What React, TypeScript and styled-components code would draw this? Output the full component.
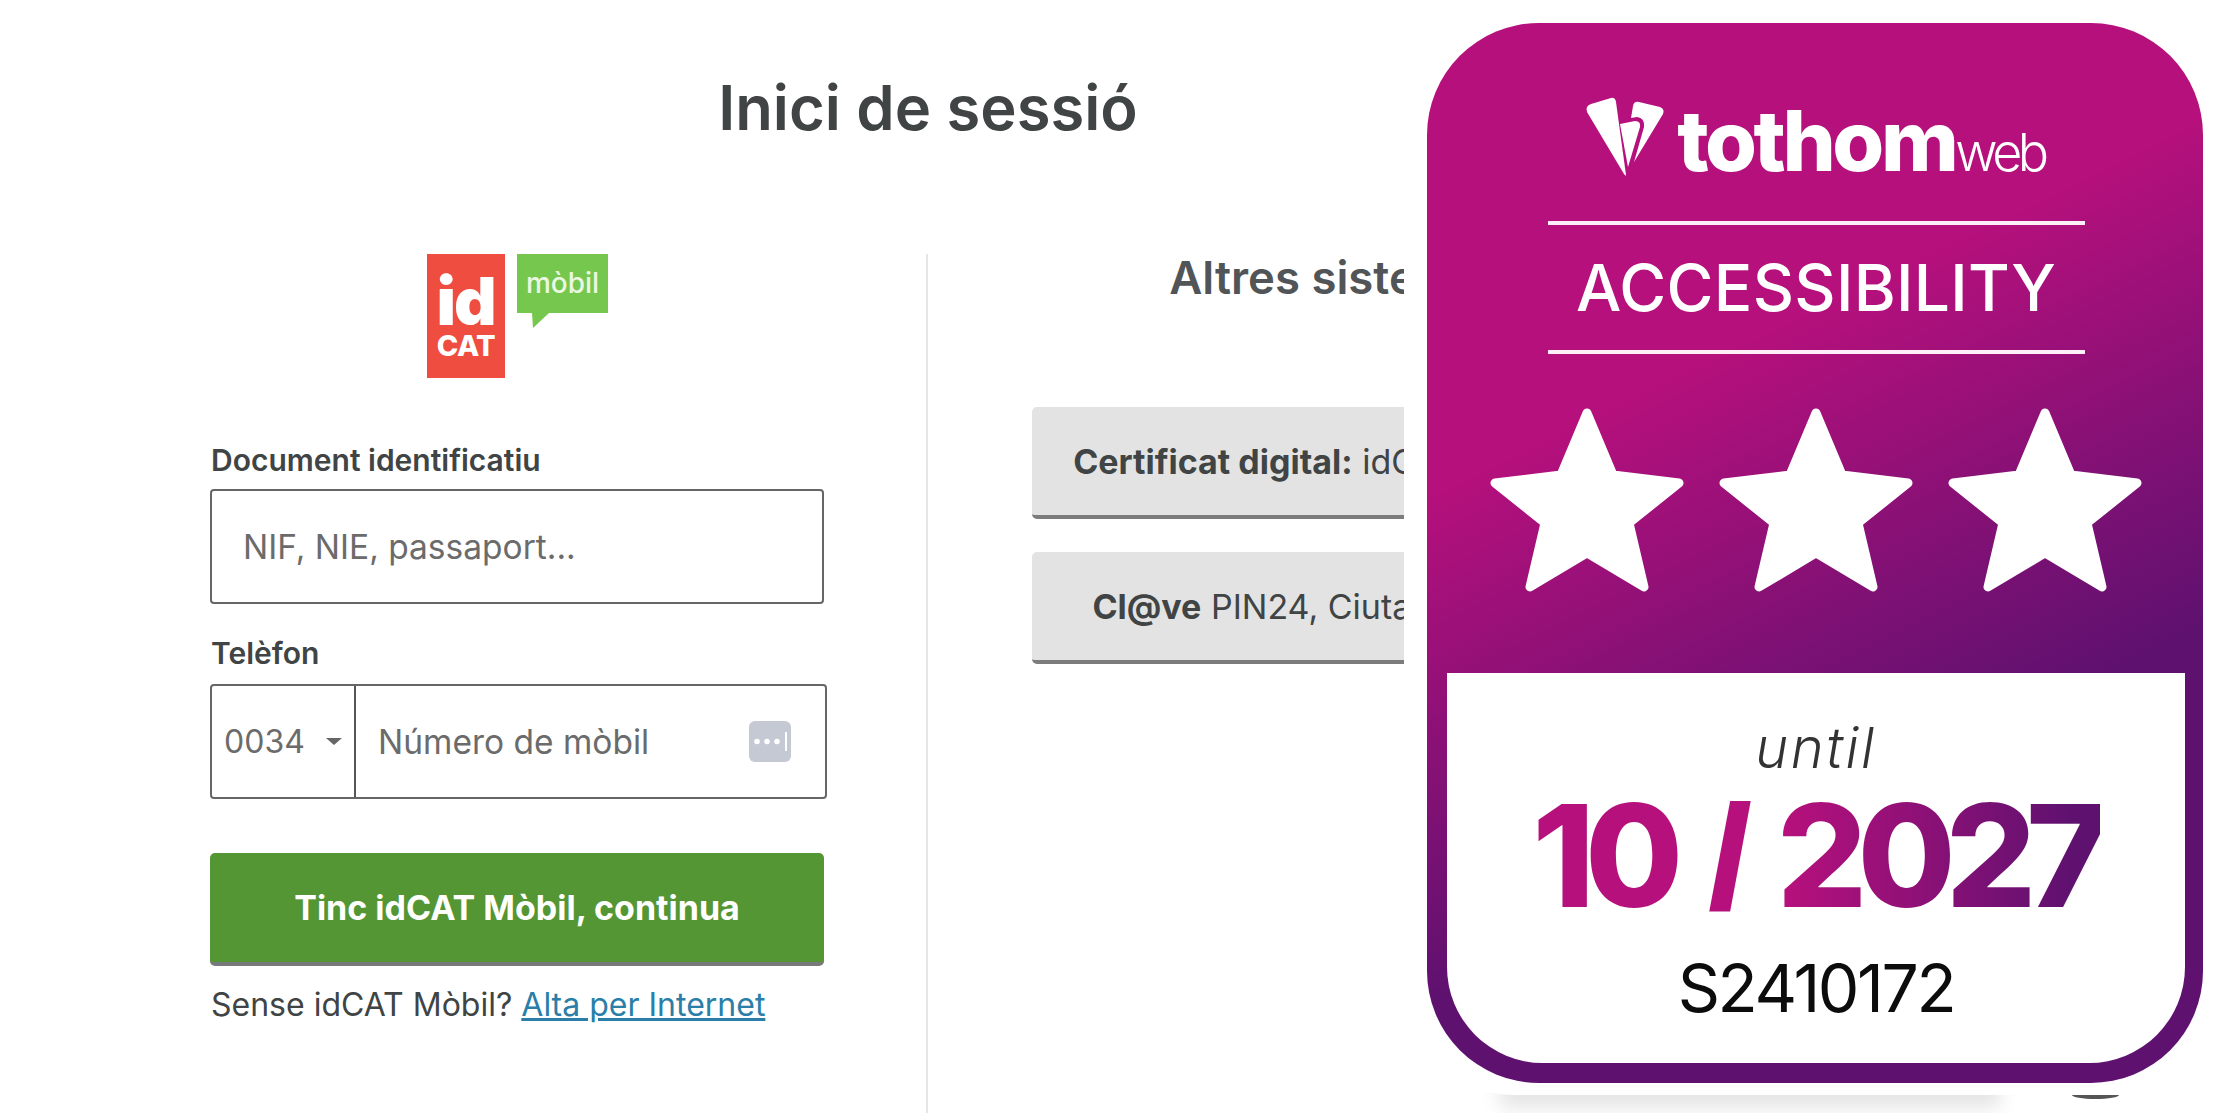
import React from "react";
import styled, { createGlobalStyle } from "styled-components";

const Global = createGlobalStyle`
  html, body { margin: 0; padding: 0; background: #fff; overflow: hidden; }
  body { font-family: Inter, "Liberation Sans", sans-serif; color: #404444; }
`;

const Page = styled.div`
  position: relative;
  isolation: isolate;
  width: 2240px;
  height: 1113px;
  overflow: hidden;
  background: #fff;
`;
const Title = styled.h1`
  margin: 0;
  padding-top: 72px;
  text-align: center;
  width: 1856px;
  font-size: 61.5px;
  line-height: 72px;
  font-weight: 600;
  color: #404444;
`;
const Columns = styled.div`
  display: grid;
  grid-template-columns: 926px 1fr;
  margin-top: 110px;
`;
const LeftColumn = styled.section`
  padding-left: 210px;
  width: 617px;
`;
const LogoRow = styled.div`
  display: flex;
  justify-content: flex-start;
  padding-left: 217px;
  height: 180px;
`;
const FieldLabel = styled.label<{ $top: number }>`
  display: block;
  margin-top: ${(p) => p.$top}px;
  padding-left: 1px;
  font-size: 30px;
  line-height: 36px;
  font-weight: 600;
  color: #404444;
`;
const TextBox = styled.div`
  box-sizing: border-box;
  margin-top: 11px;
  width: 614px;
  height: 115px;
  border: 2px solid #666;
  border-radius: 4px;
  display: flex;
  align-items: center;
  padding-left: 31px;
`;
const Placeholder = styled.span`
  font-size: 33.5px;
  color: #6b6b6b;
`;
const PhoneBox = styled.div`
  box-sizing: border-box;
  margin-top: 13px;
  width: 617px;
  height: 115px;
  border: 2px solid #666;
  border-radius: 4px;
  display: grid;
  grid-template-columns: 144px 1fr;
`;
const Prefix = styled.div`
  display: flex;
  align-items: center;
  gap: 21px;
  padding-left: 12px;
  border-right: 2px solid #555;
  font-size: 32px;
  color: #6b6b6b;
`;
const Caret = styled.span`
  width: 0;
  height: 0;
  border-left: 8px solid transparent;
  border-right: 8px solid transparent;
  border-top: 7px solid #666;
`;
const PhoneInput = styled.div`
  display: flex;
  align-items: center;
  justify-content: space-between;
  padding: 0 34px 0 22px;
`;
const KeyBadge = styled.span`
  width: 42px;
  height: 41px;
  display: block;
  border-radius: 6px;
  background: #c4c9d3;
`;
const PrimaryButton = styled.button`
  box-sizing: border-box;
  display: block;
  margin-top: 54px;
  width: 614px;
  height: 113px;
  border: 0;
  border-bottom: 4px solid #77797a;
  border-radius: 5px;
  background: #549634;
  color: #fff;
  font-family: inherit;
  font-size: 34px;
  font-weight: 700;
`;
const Hint = styled.p`
  margin: 20px 0 0 1px;
  font-size: 32px;
  line-height: 38px;
  color: #404444;
`;
const HintLink = styled.a`
  color: #2a7ea8;
  text-decoration: underline;
`;
const RightColumn = styled.section`
  border-left: 2px solid #e6e6e6;
  height: 900px;
  padding-left: 104px;
`;
const SubTitle = styled.h2`
  margin: -1px 0 0;
  width: 614px;
  text-align: center;
  font-size: 45.5px;
  line-height: 50px;
  font-weight: 600;
  color: #515558;
  white-space: nowrap;
`;
const AltButton = styled.div<{ $top: number }>`
  box-sizing: border-box;
  margin-top: ${(p) => p.$top}px;
  width: 614px;
  height: 112px;
  border-bottom: 4px solid #7c7c7c;
  border-radius: 5px;
  background: #e3e3e3;
  display: flex;
  align-items: center;
  justify-content: center;
  font-size: 34px;
  color: #404444;
  white-space: nowrap;
`;
const AltLabel = styled.span``;
const Strong = styled.strong`
  font-weight: 700;
`;

const BadgeCard = styled.aside`
  position: absolute;
  left: 1404px;
  top: 0;
  width: 836px;
  height: 1095px;
  padding: 23px 37px 0 23px;
  box-sizing: border-box;
  background: #fff;
  border-radius: 0 0 110px 110px;

  &::after {
    content: "";
    position: absolute;
    z-index: -1;
    left: 96px;
    top: 1070px;
    width: 500px;
    height: 38px;
    background: rgba(0, 0, 0, 0.1);
    filter: blur(9px);
  }
`;
const Badge = styled.div`
  box-sizing: border-box;
  width: 776px;
  height: 1060px;
  padding: 0 18px 20px 20px;
  border-radius: 112px;
  background: linear-gradient(154deg, #b5107c 33%, #5f1170 68%);
  display: flex;
  flex-direction: column;
  align-items: center;
`;
const LogoLine = styled.div`
  display: flex;
  align-items: baseline;
  height: 122px;
  margin-top: 76px;
  color: #fff;
`;
const LogoMark = styled.svg`
  width: 80px;
  height: 80px;
  align-self: flex-start;
  margin: -2px 12px 0 -2px;
`;
const LogoStrong = styled.span`
  font-size: 84px;
  line-height: 84px;
  font-weight: 800;
  letter-spacing: -3.5px;
`;
const LogoLight = styled.span`
  font-size: 52px;
  font-weight: 300;
  letter-spacing: -4.5px;
`;
const Rule = styled.div`
  width: 537px;
  height: 4px;
  background: #fdeef8;
  flex: none;
`;
const BadgeHeading = styled.div`
  height: 125px;
  display: flex;
  align-items: center;
  color: #fff;
  font-size: 64px;
  font-weight: 500;
  letter-spacing: 0.3px;
`;
const Stars = styled.div`
  display: flex;
  gap: 33px;
  margin-top: 53px;
  height: 190px;
`;
const Star = styled.svg`
  width: 196px;
  height: 190px;
  display: block;
`;
const Expiry = styled.div`
  box-sizing: border-box;
  margin-top: 76px;
  width: 738px;
  flex: 1;
  background: #fff;
  border-radius: 0 0 96px 96px;
  display: flex;
  flex-direction: column;
  align-items: center;
`;
const Until = styled.div`
  margin-top: 43px;
  font-size: 56px;
  line-height: 64px;
  font-style: italic;
  font-weight: 300;
  letter-spacing: 2.5px;
  color: #333;
`;
const DateText = styled.div`
  margin-top: 5px;
  font-size: 142px;
  line-height: 140px;
  font-weight: 800;
  letter-spacing: -10px;
  word-spacing: 16px;
  background: linear-gradient(90deg, #b5107c 45%, #5f1170 95%);
  -webkit-background-clip: text;
  background-clip: text;
  color: transparent;
`;
const Slash = styled.span`
  font-family: "Liberation Sans", sans-serif;
  font-weight: 700;
  -webkit-text-stroke: 4px transparent;
`;
const Code = styled.div`
  margin-top: 23px;
  font-size: 66px;
  line-height: 74px;
  font-weight: 400;
  letter-spacing: -2.4px;
  color: #0c0c0c;
`;
const Smudge = styled.div`
  position: absolute;
  left: 2072px;
  top: 1095px;
  width: 47px;
  height: 4px;
  border-radius: 0 0 24px 24px / 0 0 4px 4px;
  background: #555;
`;

const IdCatLogo = () => (
  <svg width="182" height="125" viewBox="0 0 182 125" role="img" aria-label="idCAT mòbil">
    <rect x="0" y="0" width="78" height="124" fill="#ef4d3f" />
    <text x="38.5" y="71" textAnchor="middle" fontFamily="Inter, sans-serif" fontWeight="900" fontSize="66" letterSpacing="-2" fill="#fff">id</text>
    <text x="39" y="102" textAnchor="middle" fontFamily="Inter, sans-serif" fontWeight="800" fontSize="29" letterSpacing="-0.5" fill="#fff">CAT</text>
    <path d="M90 0h91v59H122L106 74l-1-15H90z" fill="#76c74e" />
    <text x="135.5" y="39" textAnchor="middle" fontFamily="Inter, sans-serif" fontWeight="500" fontSize="28" fill="#eaf7e2">mòbil</text>
  </svg>
);

const DotsIcon = () => (
  <KeyBadge>
    <svg width="42" height="41" viewBox="0 0 42 41">
      <circle cx="8" cy="20.5" r="2.8" fill="#fff" />
      <circle cx="18" cy="20.5" r="2.8" fill="#fff" />
      <circle cx="28" cy="20.5" r="2.8" fill="#fff" />
      <rect x="36" y="11" width="2" height="19" fill="#fff" />
    </svg>
  </KeyBadge>
);

const StarShape = () => (
  <Star viewBox="0 0 196 190">
    <path
      d="M98 6 L124 68 L190 76 L140 116 L155 180 L98 146 L41 180 L56 116 L6 76 L72 68 Z"
      fill="#fff"
      stroke="#fff"
      strokeWidth="9"
      strokeLinejoin="round"
    />
  </Star>
);

export default function App() {
  return (
    <Page>
      <Global />
      <Title>Inici de sessió</Title>
      <Columns>
        <LeftColumn>
          <LogoRow>
            <IdCatLogo />
          </LogoRow>
          <FieldLabel $top={8}>Document identificatiu</FieldLabel>
          <TextBox>
            <Placeholder>NIF, NIE, passaport...</Placeholder>
          </TextBox>
          <FieldLabel $top={31}>Telèfon</FieldLabel>
          <PhoneBox>
            <Prefix>
              0034
              <Caret />
            </Prefix>
            <PhoneInput>
              <Placeholder>Número de mòbil</Placeholder>
              <DotsIcon />
            </PhoneInput>
          </PhoneBox>
          <PrimaryButton>Tinc idCAT Mòbil, continua</PrimaryButton>
          <Hint>
            Sense idCAT Mòbil? <HintLink href="#">Alta per Internet</HintLink>
          </Hint>
        </LeftColumn>
        <RightColumn>
          <SubTitle>Altres sistemes</SubTitle>
          <AltButton $top={104}>
            <AltLabel>
              <Strong>Certificat digital:</Strong> idCAT, DNI, etc
            </AltLabel>
          </AltButton>
          <AltButton $top={33}>
            <AltLabel>
              <Strong>Cl@ve</Strong> PIN24, Ciutadania, més
            </AltLabel>
          </AltButton>
        </RightColumn>
      </Columns>
      <BadgeCard>
        <Badge>
          <LogoLine>
            <LogoMark viewBox="0 0 80 80">
              <path d="M2 15 Q0 9 6 7 L26 1 Q30 0 31 5 L41 78 Q41 80 39 77 Z" fill="#fff" />
              <path d="M35 27 L50 24 Q56 24 55 30 L43 70 Z" fill="#fff" />
              <path d="M48 9 Q49 4 54 5 L75 10 Q80 12 78 17 L49 65 L59 30 Q60 21 52 20 L46 21 Z" fill="#fff" />
            </LogoMark>
            <LogoStrong>tothom</LogoStrong>
            <LogoLight>web</LogoLight>
          </LogoLine>
          <Rule />
          <BadgeHeading>ACCESSIBILITY</BadgeHeading>
          <Rule />
          <Stars>
            <StarShape />
            <StarShape />
            <StarShape />
          </Stars>
          <Expiry>
            <Until>until</Until>
            <DateText>
              10 <Slash>/</Slash> 2027
            </DateText>
            <Code>S2410172</Code>
          </Expiry>
        </Badge>
      </BadgeCard>
      <Smudge />
    </Page>
  );
}
